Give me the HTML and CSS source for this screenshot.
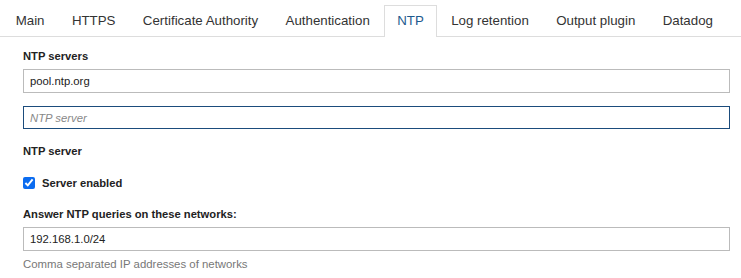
FILE: index.html
```html
<!DOCTYPE html>
<html lang="en">
<head>
    <meta charset="UTF-8">
    <meta name="viewport" content="width=device-width, initial-scale=1.0">
    <title>Settings - NTP</title>
    <link rel="stylesheet" href="styles.css">
</head>
<body>
    <ul class="tabs">
        <li class="tab">Main</li>
        <li class="tab">HTTPS</li>
        <li class="tab">Certificate Authority</li>
        <li class="tab">Authentication</li>
        <li class="tab active">NTP</li>
        <li class="tab">Log retention</li>
        <li class="tab">Output plugin</li>
        <li class="tab">Datadog</li>
    </ul>

    <form class="settings-form">
        <div class="field">
            <label class="field-label">NTP servers</label>
            <input class="text-input" type="text" value="pool.ntp.org">
            <input class="text-input focused" type="text" placeholder="NTP server">
        </div>

        <div class="field">
            <h4 class="section-title">NTP server</h4>
            <label class="checkbox-row">
                <input class="checkbox" type="checkbox" checked>
                <span>Server enabled</span>
            </label>
        </div>

        <div class="field">
            <label class="field-label">Answer NTP queries on these networks:</label>
            <input class="text-input" type="text" value="192.168.1.0/24">
            <p class="help-text">Comma separated IP addresses of networks</p>
        </div>
    </form>
</body>
</html>
```

FILE: styles.css
```css
* {
    margin: 0;
    padding: 0;
    box-sizing: border-box;
}

body {
    font-family: "Liberation Sans", Arial, sans-serif;
    font-size: 13px;
    color: #222;
    background: #fff;
}

.tabs {
    list-style: none;
    display: flex;
    padding: 5px 0 0 2px;
    border-bottom: 1px solid #ddd;
}

.tab {
    height: 31px;
    line-height: 29px;
    padding: 0 12.7px;
    border: 1px solid transparent;
    border-bottom: none;
    margin-bottom: -1px;
    color: #333;
    font-size: 13.3px;
}

.tab.active {
    background: #fff;
    border-color: #ddd;
    height: 32px;
    color: #1d5a8e;
}

.settings-form {
    padding: 11px 11px 0 23px;
}

.field-label,
.section-title {
    display: block;
    font-weight: bold;
    font-size: 11.2px;
    line-height: 16px;
    margin-bottom: 5px;
}

.section-title {
    margin-bottom: 16px;
}

.text-input {
    display: block;
    width: 100%;
    height: 24px;
    border: 1px solid #bbb;
    padding: 0 6px;
    font-family: inherit;
    font-size: 11.3px;
    color: #222;
    margin-bottom: 13px;
    outline: none;
}

.text-input.focused {
    border-color: #1b4c7c;
    height: 23px;
    margin-bottom: 14px;
}

.text-input::placeholder {
    font-style: italic;
    color: #888;
}

.checkbox-row {
    display: flex;
    align-items: center;
    height: 16px;
    gap: 7px;
    font-weight: bold;
    font-size: 11.2px;
    margin-bottom: 15px;
}

.checkbox {
    width: 12px;
    height: 12px;
    accent-color: #0b6cf0;
}

.field:last-child .text-input {
    margin-bottom: 5px;
}

.help-text {
    font-size: 11.4px;
    line-height: 16px;
    color: #777;
}
```
